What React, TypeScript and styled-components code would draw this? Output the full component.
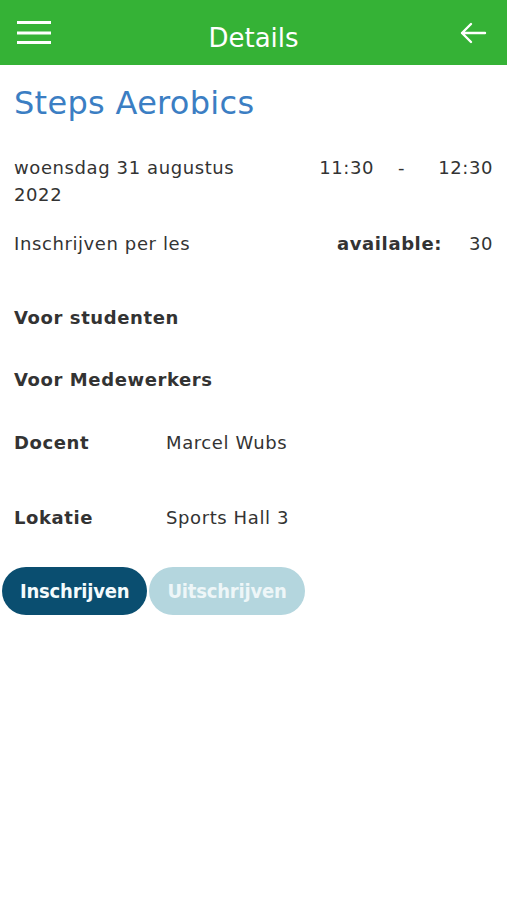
import React from "react";
import styled, { createGlobalStyle } from "styled-components";

const Global = createGlobalStyle`
  html, body { margin: 0; padding: 0; background: #fff; }
  body { font-family: "DejaVu Sans", Verdana, sans-serif; color: #333; }
`;

const Page = styled.div`
  width: 507px;
  min-height: 900px;
  background: #fff;
`;

const Header = styled.header`
  height: 65px;
  background: #35b236;
  display: flex;
  align-items: center;
  justify-content: space-between;
  padding: 0 17px;
  box-sizing: border-box;
  color: #fff;
`;

const Title = styled.h1`
  margin: 10px 0 0;
  font-size: 26px;
  font-weight: normal;
  color: #fff;
  font-family: "DejaVu Sans", sans-serif;
`;

const IconBtn = styled.div`
  width: 34px;
  height: 30px;
  display: flex;
  align-items: center;
  justify-content: center;
`;

const Content = styled.main`
  padding: 0 14px;
`;

const Heading = styled.h2`
  margin: 20px 0 33px;
  font-size: 32px;
  font-weight: normal;
  color: #3b7ec3;
  line-height: 36px;
  letter-spacing: 0.3px;
`;

const Row = styled.div<{ $mt?: number }>`
  display: flex;
  justify-content: space-between;
  align-items: flex-start;
  font-size: 18px;
  letter-spacing: 0.6px;
  line-height: 27px;
  margin-top: ${(p) => p.$mt ?? 0}px;
`;

const DateCol = styled.div`
  width: 260px;
`;

const Times = styled.div`
  display: flex;
`;

const Time = styled.span<{ $w: number }>`
  width: ${(p) => p.$w}px;
  text-align: right;
`;

const Avail = styled.div`
  display: flex;
`;

const Bold = styled.span`
  font-weight: bold;
`;

const Section = styled.div<{ $mt: number }>`
  font-size: 18px;
  letter-spacing: 0.6px;
  font-weight: bold;
  line-height: 27px;
  margin-top: ${(p) => p.$mt}px;
`;

const InfoRow = styled.div<{ $mt: number }>`
  display: grid;
  grid-template-columns: 152px 1fr;
  font-size: 18px;
  letter-spacing: 0.6px;
  line-height: 27px;
  margin-top: ${(p) => p.$mt}px;
`;

const Buttons = styled.div`
  display: flex;
  gap: 2px;
  padding-left: 2px;
  margin-top: 36px;
`;

const Button = styled.button<{ $primary?: boolean }>`
  height: 48px;
  border: none;
  border-radius: 24px;
  padding: 0 18px;
  font-family: "DejaVu Sans Condensed", "DejaVu Sans", sans-serif;
  font-size: 20px;
  letter-spacing: -0.2px;
  font-weight: bold;
  color: ${(p) => (p.$primary ? "#f4fbfd" : "#eef6f8")};
  background: ${(p) => (p.$primary ? "#0a4e70" : "#b4d6de")};
  cursor: pointer;
`;

export default function App() {
  return (
    <Page>
      <Global />
      <Header>
        <IconBtn>
          <svg width="34" height="26" viewBox="0 0 34 26">
            <rect x="0" y="1" width="34" height="3" fill="#fff" />
            <rect x="0" y="11.5" width="34" height="3" fill="#fff" />
            <rect x="0" y="21" width="34" height="3" fill="#fff" />
          </svg>
        </IconBtn>
        <Title>Details</Title>
        <IconBtn>
          <svg width="28" height="24" viewBox="0 0 28 24">
            <path d="M26 12 H3 M12 3 L3 12 L12 21" fill="none" stroke="#fff" strokeWidth="2.4" strokeLinecap="round" strokeLinejoin="round" />
          </svg>
        </IconBtn>
      </Header>
      <Content>
        <Heading>Steps Aerobics</Heading>
        <Row>
          <DateCol>woensdag 31 augustus 2022</DateCol>
          <Times>
            <Time $w={60}>11:30</Time>
            <Time $w={31}>-</Time>
            <Time $w={88}>12:30</Time>
          </Times>
        </Row>
        <Row $mt={22}>
          <span>Inschrijven per les</span>
          <Avail>
            <Bold>available:</Bold>
            <Time $w={51}>30</Time>
          </Avail>
        </Row>
        <Section $mt={47}>Voor studenten</Section>
        <Section $mt={35}>Voor Medewerkers</Section>
        <InfoRow $mt={36}>
          <Bold>Docent</Bold>
          <span>Marcel Wubs</span>
        </InfoRow>
        <InfoRow $mt={48}>
          <Bold>Lokatie</Bold>
          <span>Sports Hall 3</span>
        </InfoRow>
      </Content>
      <Buttons>
        <Button $primary>Inschrijven</Button>
        <Button>Uitschrijven</Button>
      </Buttons>
    </Page>
  );
}
